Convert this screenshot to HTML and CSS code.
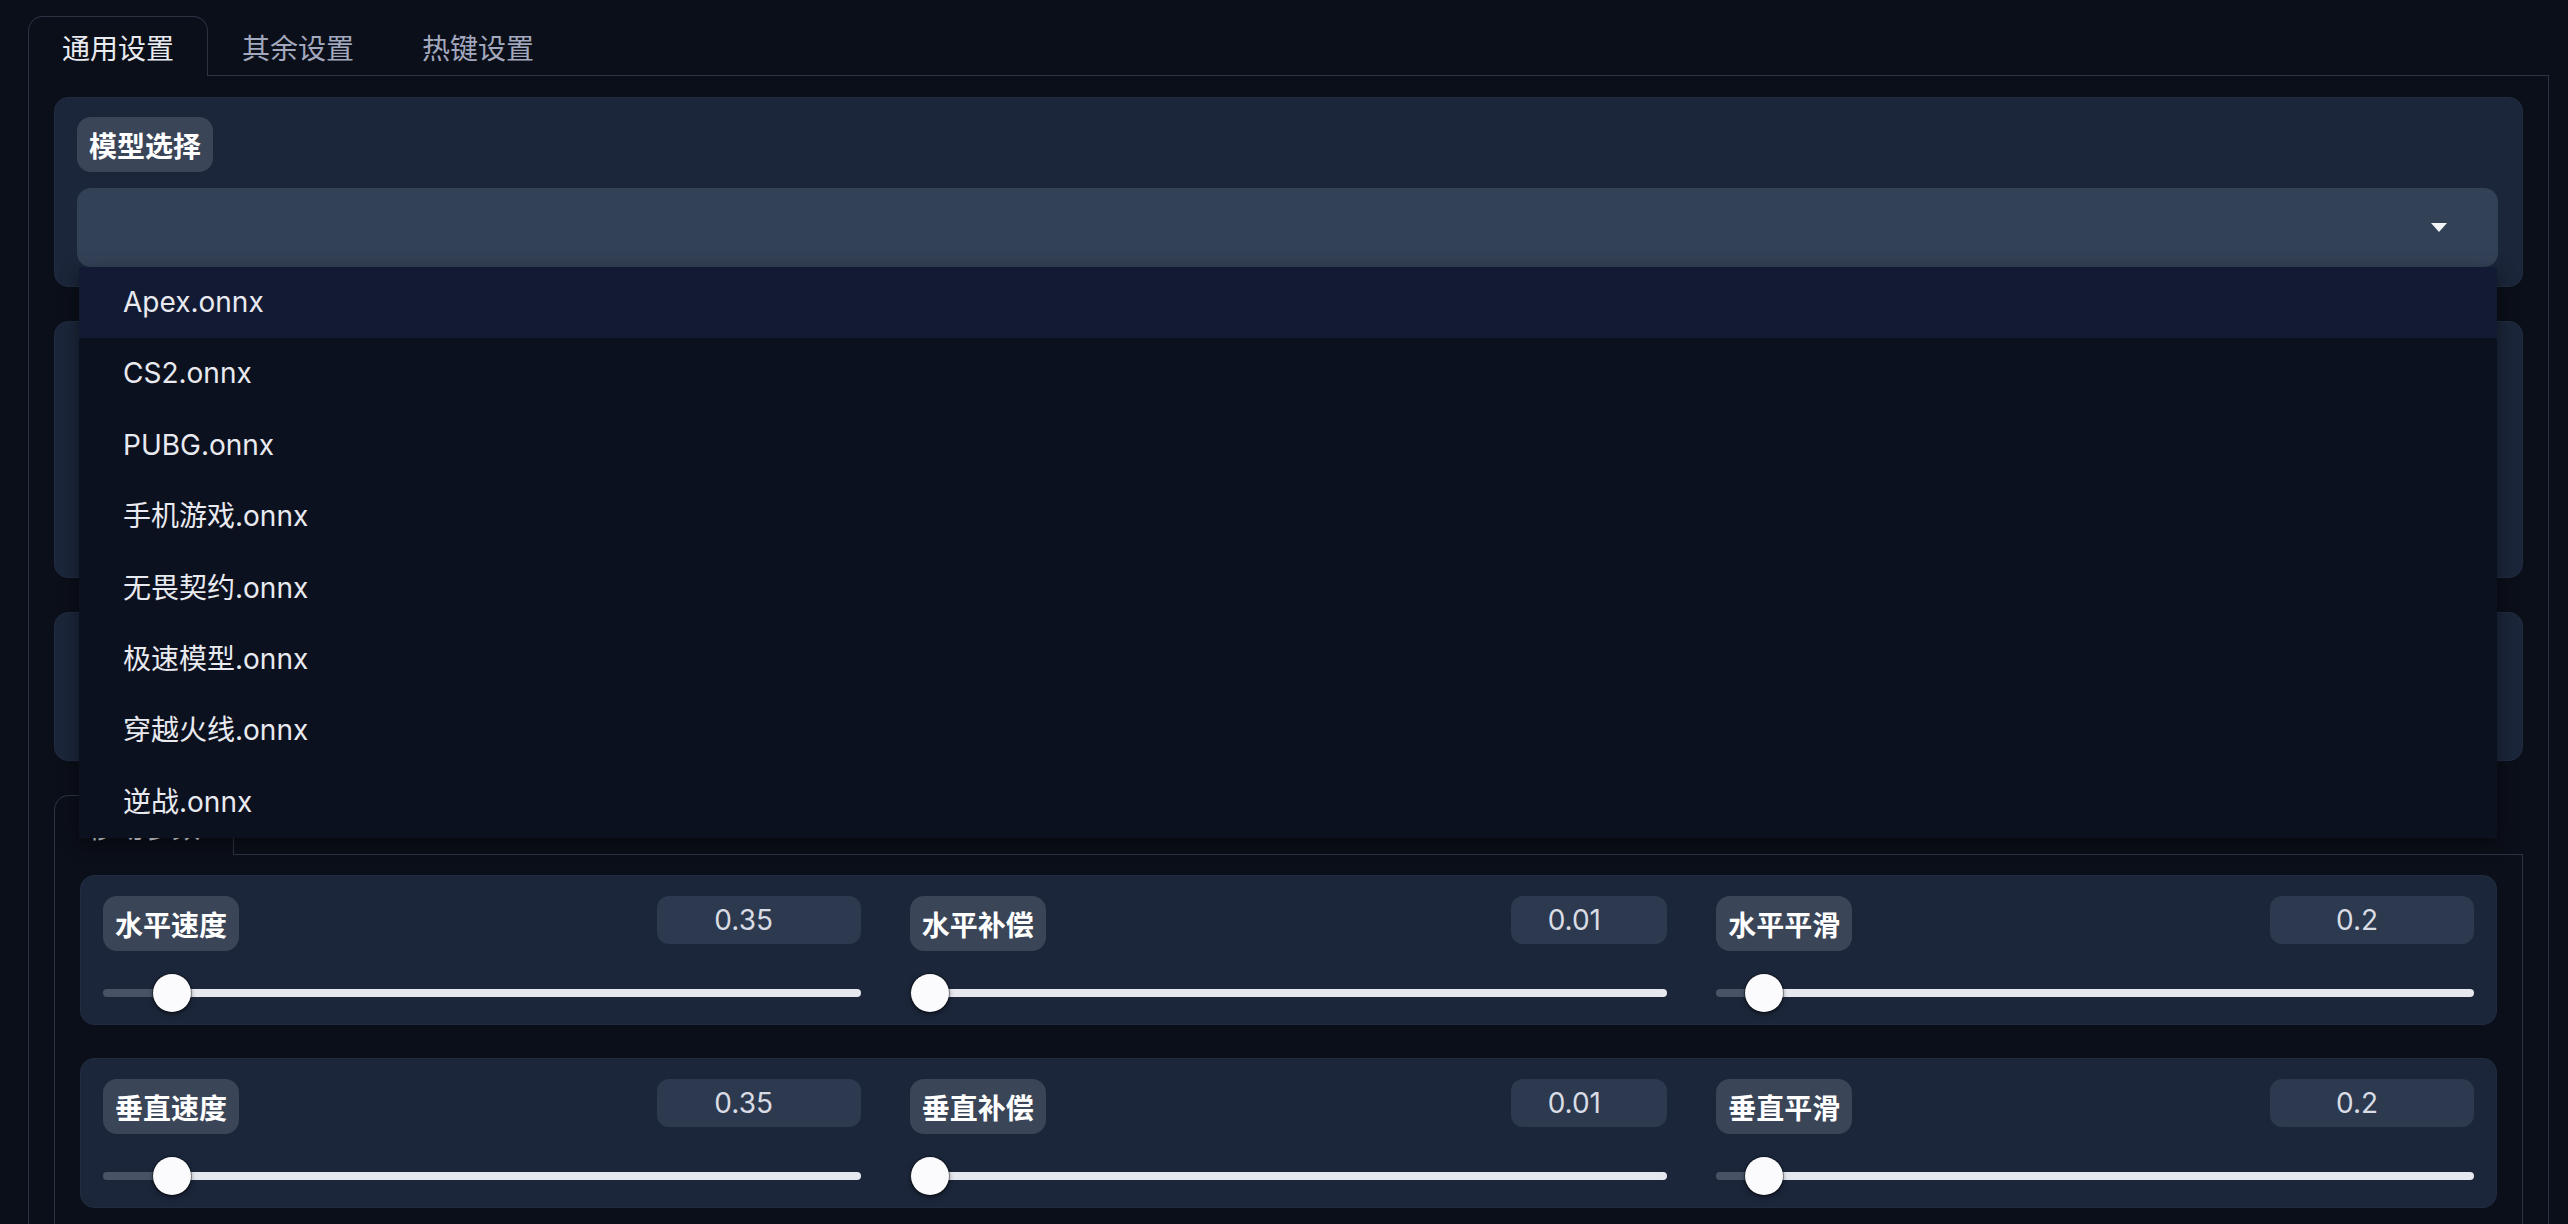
FILE: index.html
```html
<!DOCTYPE html>
<html lang="zh-CN">
<head>
    <meta charset="UTF-8">
    <meta name="viewport" content="width=device-width, initial-scale=1.0">
    <title>设置</title>
    <link rel="stylesheet" href="styles.css">
</head>
<body>
    <div class="app">
        <div class="tabs">
            <div class="tab-nav">
                <button class="tab selected">通用设置</button>
                <button class="tab">其余设置</button>
                <button class="tab">热键设置</button>
            </div>
            <div class="tab-body">
                <!-- model picker, list is open -->
                <div class="block">
                    <span class="badge">模型选择</span>
                    <div class="select-wrap">
                        <div class="select">
                            <svg class="caret" width="16" height="9" viewBox="0 0 16 9"><path d="M0 0h16L8 9z" fill="#f3f4f6"/></svg>
                        </div>
                        <ul class="options">
                            <li class="active">Apex.onnx</li>
                            <li>CS2.onnx</li>
                            <li>PUBG.onnx</li>
                            <li>手机游戏.onnx</li>
                            <li>无畏契约.onnx</li>
                            <li>极速模型.onnx</li>
                            <li>穿越火线.onnx</li>
                            <li>逆战.onnx</li>
                        </ul>
                    </div>
                </div>

                <div class="block block-tall"></div>
                <div class="block block-short"></div>

                <div class="tabs">
                    <div class="tab-nav">
                        <button class="tab selected">移动参数</button>
                    </div>
                    <div class="tab-body inner">
                        <div class="block slider-row">
                            <div class="slider">
                                <div class="slider-head">
                                    <span class="badge">水平速度</span>
                                    <input class="num" type="number" value="0.35">
                                </div>
                                <input class="range" type="range" min="0" max="5" step="0.01" value="0.35" style="--fill: 7%">
                            </div>
                            <div class="slider">
                                <div class="slider-head">
                                    <span class="badge">水平补偿</span>
                                    <input class="num num-sm" type="number" value="0.01">
                                </div>
                                <input class="range" type="range" min="0" max="5" step="0.01" value="0.01" style="--fill: 0.2%">
                            </div>
                            <div class="slider">
                                <div class="slider-head">
                                    <span class="badge">水平平滑</span>
                                    <input class="num" type="number" value="0.2">
                                </div>
                                <input class="range" type="range" min="0" max="5" step="0.01" value="0.2" style="--fill: 4%">
                            </div>
                        </div>

                        <div class="block slider-row">
                            <div class="slider">
                                <div class="slider-head">
                                    <span class="badge">垂直速度</span>
                                    <input class="num" type="number" value="0.35">
                                </div>
                                <input class="range" type="range" min="0" max="5" step="0.01" value="0.35" style="--fill: 7%">
                            </div>
                            <div class="slider">
                                <div class="slider-head">
                                    <span class="badge">垂直补偿</span>
                                    <input class="num num-sm" type="number" value="0.01">
                                </div>
                                <input class="range" type="range" min="0" max="5" step="0.01" value="0.01" style="--fill: 0.2%">
                            </div>
                            <div class="slider">
                                <div class="slider-head">
                                    <span class="badge">垂直平滑</span>
                                    <input class="num" type="number" value="0.2">
                                </div>
                                <input class="range" type="range" min="0" max="5" step="0.01" value="0.2" style="--fill: 4%">
                            </div>
                        </div>
                    </div>
                </div>
            </div>
        </div>
    </div>
</body>
</html>
```

FILE: styles.css
```css
body {
    margin: 0;
    background: #0b0f19;
    color: #e5e7eb;
    font-family: Inter, "Noto Sans CJK SC", sans-serif;
    font-size: 28px;
}
.app {
    padding: 16px 19px 0 28px;
}

/* tabs */
.tab-nav {
    display: flex;
    border-bottom: 1px solid #2c3444;
}
.tab {
    height: 60px;
    margin-bottom: -1px;
    padding: 0 33px;
    border: 1px solid transparent;
    border-bottom: none;
    border-radius: 15px 15px 0 0;
    background: transparent;
    color: #a2a8be;
    font-family: inherit;
    font-size: 28px;
    cursor: pointer;
}
.tab.selected {
    border-color: #2c3444;
    background: #0b0f19;
    color: #e8eaf0;
}
.tab-body {
    border: 1px solid #2c3444;
    border-top: none;
    padding: 21px 25px;
    display: flex;
    flex-direction: column;
    gap: 34px;
}
.tab-body.inner {
    gap: 33px;
    padding-top: 20px;
}

/* blocks */
.block {
    background: #1b263a;
    border: 1px solid #212c41;
    border-radius: 14px;
    padding: 19px 24px 19px 22px;
}
.block-tall {
    height: 257px;
    box-sizing: border-box;
}
.block-short {
    height: 149px;
    box-sizing: border-box;
}
.badge {
    display: inline-flex;
    align-items: center;
    height: 55px;
    padding: 0 12px;
    border-radius: 14px;
    background: #3a4558;
    color: #fff;
    font-weight: 700;
    font-size: 28px;
}

/* dropdown */
.select-wrap {
    position: relative;
    margin-top: 16px;
}
.select {
    height: 79px;
    border-radius: 14px;
    background: #334157;
    display: flex;
    align-items: center;
    justify-content: flex-end;
    padding-right: 51px;
}
.options {
    position: absolute;
    top: 100%;
    left: 2px;
    right: 1px;
    z-index: 10;
    margin: 0;
    padding: 0;
    list-style: none;
    background: #0c111f;
    box-shadow: 0 6px 18px rgba(0,0,0,0.45);
}
.options li {
    height: 71.4px;
    line-height: 71.4px;
    padding-left: 44px;
    color: #e8eaf0;
}
.options li.active {
    background: #131a34;
}

/* sliders */
.slider-row {
    display: grid;
    grid-template-columns: repeat(3, 1fr);
    gap: 49px;
    padding: 20px 22px 11px 22px;
}
.slider-head {
    display: flex;
    justify-content: space-between;
    align-items: flex-start;
}
.num {
    -webkit-appearance: textfield;
    appearance: textfield;
    width: 204px;
    height: 48px;
    box-sizing: border-box;
    padding: 0 30px 0 0;
    border: none;
    border-radius: 12px;
    background: #2c394e;
    color: #d9dce4;
    font-family: inherit;
    font-size: 28px;
    text-align: center;
}
.num::-webkit-inner-spin-button,
.num::-webkit-outer-spin-button {
    -webkit-appearance: none;
    margin: 0;
}
.num-sm {
    width: 156px;
}
.range {
    -webkit-appearance: none;
    appearance: none;
    display: block;
    width: 100%;
    height: 40px;
    margin: 22px 0 0 0;
    background: transparent;
}
.range::-webkit-slider-runnable-track {
    height: 8px;
    border-radius: 4px;
    background: linear-gradient(to right, #4a5366 var(--fill), #e6e7ef var(--fill));
}
.range::-webkit-slider-thumb {
    -webkit-appearance: none;
    width: 38px;
    height: 38px;
    margin-top: -15px;
    border-radius: 50%;
    background: #fbfbfd;
    box-shadow: 0 0 0 1px rgba(0,0,0,0.35), 0 2px 5px rgba(0,0,0,0.5);
}
```
